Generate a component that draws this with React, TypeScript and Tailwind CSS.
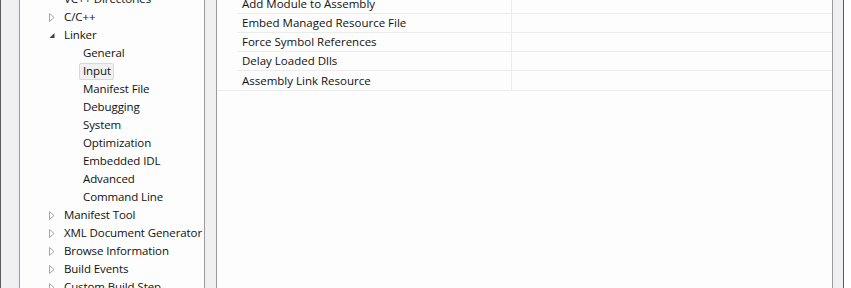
import React from "react";

type Node = { label: string; level: 0 | 1; state?: "open" | "closed"; selected?: boolean };

const TREE: Node[] = [
  { label: "VC++ Directories", level: 0 },
  { label: "C/C++", level: 0, state: "closed" },
  { label: "Linker", level: 0, state: "open" },
  { label: "General", level: 1 },
  { label: "Input", level: 1, selected: true },
  { label: "Manifest File", level: 1 },
  { label: "Debugging", level: 1 },
  { label: "System", level: 1 },
  { label: "Optimization", level: 1 },
  { label: "Embedded IDL", level: 1 },
  { label: "Advanced", level: 1 },
  { label: "Command Line", level: 1 },
  { label: "Manifest Tool", level: 0, state: "closed" },
  { label: "XML Document Generator", level: 0, state: "closed" },
  { label: "Browse Information", level: 0, state: "closed" },
  { label: "Build Events", level: 0, state: "closed" },
  { label: "Custom Build Step", level: 0, state: "closed" },
];

const PROPS = [
  "Add Module to Assembly",
  "Embed Managed Resource File",
  "Force Symbol References",
  "Delay Loaded Dlls",
  "Assembly Link Resource",
];

function Arrow({ state }: { state?: "open" | "closed" }) {
  if (state === "closed") {
    return (
      <svg width="6" height="9" viewBox="0 0 6 9" aria-hidden>
        <polygon points="0.5,0.5 5,4.5 0.5,8.5" fill="#ffffff" stroke="#a6a6a6" strokeWidth="1" />
      </svg>
    );
  }
  if (state === "open") {
    return (
      <svg width="6" height="9" viewBox="0 0 6 9" aria-hidden>
        <polygon points="5.5,2 5.5,7 0.5,7" fill="#404040" />
      </svg>
    );
  }
  return null;
}

function TreeRow({ node }: { node: Node }) {
  return (
    <div className="flex h-[18px] items-center whitespace-nowrap">
      <div className={node.level === 0 ? "flex w-[44px] shrink-0 justify-end pr-[9px]" : "w-[63px] shrink-0"}>
        {node.level === 0 && <Arrow state={node.state} />}
      </div>
      {node.selected ? (
        <span className="-ml-[4px] flex h-[17px] items-center rounded-[2px] border border-[#d8d8d8] bg-[#f1f1f1] pl-[3px] pr-[2px]">
          {node.label}
        </span>
      ) : (
        <span className="shrink-0">{node.label}</span>
      )}
    </div>
  );
}

export default function App() {
  return (
    <div className="flex h-[288px] w-[851px] overflow-hidden bg-white font-['Open_Sans','Noto_Sans',sans-serif] text-[11.5px] text-[#111111]">
      {/* left dialog edge */}
      <div className="w-[1px] shrink-0 bg-[#5c5c5c]" />
      <div className="w-[18px] shrink-0 bg-[#f0eff2]" />

      {/* category tree */}
      <div className="w-[186px] shrink-0 overflow-hidden border-x border-[#9a9a9a] bg-[#fcfdfc] tracking-[-0.1px]">
        <div className="-mt-[10px]">
          {TREE.map((n) => (
            <TreeRow key={n.label} node={n} />
          ))}
        </div>
      </div>

      <div className="w-[11px] shrink-0 bg-[#f0eff2]" />

      {/* property grid */}
      <div className="w-[617px] shrink-0 overflow-hidden border-x border-[#9a9a9a] bg-[#fcfdfc]">
        <div className="-mt-[5px] border-b border-[#ececec]">
          {PROPS.map((p, i) => (
            <div key={p} className="flex h-[19px] whitespace-nowrap">
              <div className="w-[20px] shrink-0" />
              <div className={"flex flex-1 " + (i < PROPS.length - 1 ? "border-b border-[#ececec]" : "")}>
                <div className="flex w-[275px] shrink-0 items-center border-r border-[#ececec] pl-[5px]">
                  {p}
                </div>
                <div className="flex-1" />
              </div>
            </div>
          ))}
        </div>
      </div>

      <div className="w-[10px] shrink-0 bg-[#f0eff2]" />
      <div className="w-[1px] shrink-0 bg-[#5c5c5c]" />
      <div className="flex-1 bg-white" />
    </div>
  );
}
